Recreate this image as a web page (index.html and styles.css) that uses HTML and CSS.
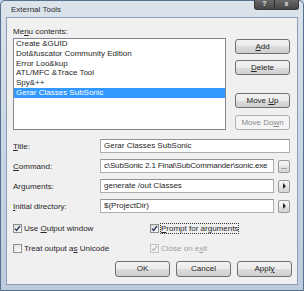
FILE: index.html
```html
<!DOCTYPE html>
<html lang="en">
<head>
    <title>External Tools</title>
    <link rel="stylesheet" href="styles.css">
</head>
<body>
<div class="window">
    <div class="titlebar">
        <span class="title">External Tools</span>
        <div class="caption">
            <span class="cap-help">?</span>
            <span class="cap-close">x</span>
        </div>
    </div>

    <div class="client">
        <div class="top">
            <div class="menuCol">
                <div class="fieldLabel">Me<u>n</u>u contents:</div>
                <ul class="menuList">
                    <li>Create &amp;GUID</li>
                    <li>Dot&amp;fuscator Community Edition</li>
                    <li>Error Loo&amp;kup</li>
                    <li>ATL/MFC &amp;Trace Tool</li>
                    <li>Spy&amp;++</li>
                    <li class="selected">Gerar Classes SubSonic</li>
                </ul>
            </div>
            <div class="sideButtons">
                <button class="btn"><u>A</u>dd</button>
                <button class="btn btnDelete"><u>D</u>elete</button>
                <button class="btn btnUp">Move <u>U</u>p</button>
                <button class="btn btnDown" disabled>Move Do<u>w</u>n</button>
            </div>
        </div>

        <div class="fields">
            <div class="fieldRow">
                <label><u>T</u>itle:</label>
                <div class="textbox">Gerar Classes SubSonic</div>
            </div>
            <div class="fieldRow">
                <label><u>C</u>ommand:</label>
                <div class="textbox tight">c\SubSonic 2.1 Final\SubCommander\sonic.exe</div>
                <button class="mini">...</button>
            </div>
            <div class="fieldRow">
                <label>Ar<u>g</u>uments:</label>
                <div class="textbox">generate /out Classes</div>
                <button class="mini"><span class="arrow"></span></button>
            </div>
            <div class="fieldRow">
                <label><u>I</u>nitial directory:</label>
                <div class="textbox">$(ProjectDir)</div>
                <button class="mini"><span class="arrow"></span></button>
            </div>
        </div>

        <div class="checks">
            <div class="check">
                <span class="box"><svg width="7" height="7" viewBox="0 0 7 7"><path d="M1 3.6 L2.6 5.4 L6 1" fill="none" stroke="#24345a" stroke-width="1.3"/></svg></span>
                <span>Use <u>O</u>utput window</span>
            </div>
            <div class="check">
                <span class="box"><svg width="7" height="7" viewBox="0 0 7 7"><path d="M1 3.6 L2.6 5.4 L6 1" fill="none" stroke="#24345a" stroke-width="1.3"/></svg></span>
                <span class="focus"><u>P</u>rompt for arguments</span>
            </div>
            <div class="check">
                <span class="box"></span>
                <span>Treat output a<u>s</u> Unicode</span>
            </div>
            <div class="check disabled">
                <span class="box"><svg width="7" height="7" viewBox="0 0 7 7"><path d="M1 3.6 L2.6 5.4 L6 1" fill="none" stroke="#b8b8b8" stroke-width="1.3"/></svg></span>
                <span>Close on e<u>x</u>it</span>
            </div>
        </div>

        <div class="actions">
            <button class="btn">OK</button>
            <button class="btn">Cancel</button>
            <button class="btn">Appl<u>y</u></button>
        </div>
    </div>
</div>
</body>
</html>
```

FILE: styles.css
```css
body {
    margin: 0;
    font-family: "Liberation Sans", Arial, sans-serif;
    font-size: 8px;
    color: #262626;
    background: #c6d4e3;
}

u {
    text-decoration-thickness: 1px;
    text-underline-offset: 1px;
}

.window {
    width: 304px;
    height: 291px;
    box-sizing: border-box;
    border: 1px solid #56708f;
    border-radius: 5px 5px 0 0;
    background: linear-gradient(#dce3eb, #cdd8e5 40%, #bccbdd);
    padding: 0 5px 5px 5px;
    display: flex;
    flex-direction: column;
}

.titlebar {
    height: 16px;
    display: flex;
    align-items: flex-start;
}

.title {
    padding: 4px 0 0 5px;
    line-height: 9px;
    color: #2b2b2b;
}

.caption {
    margin-left: auto;
    margin-top: -1px;
    margin-right: -1px;
    display: flex;
    height: 9px;
    background: linear-gradient(#6a6a6a, #454545);
    border: 1px solid #3a3a3a;
    border-top: none;
    border-radius: 0 0 3px 3px;
    color: #e8e8e8;
    font-size: 7px;
    line-height: 8px;
    font-weight: bold;
}

.cap-help {
    width: 19px;
    text-align: center;
    border-right: 1px solid #2e2e2e;
}

.cap-close {
    width: 23px;
    text-align: center;
}

.client {
    flex: 1;
    background: #f0f0f0;
    border: 1px solid #8b9fb8;
    padding: 9px 7px 7px 6px;
    display: flex;
    flex-direction: column;
}

.top {
    display: flex;
    gap: 9px;
}

.menuCol {
    width: 213px;
    display: flex;
    flex-direction: column;
}

.fieldLabel {
    line-height: 10px;
    margin-bottom: 1px;
}

.menuList {
    height: 92px;
    box-sizing: border-box;
    border: 1px solid #828790;
    background: #ffffff;
    list-style: none;
    margin: 0;
    padding: 0;
}

.menuList li {
    height: 9.8px;
    line-height: 9.8px;
    padding-left: 2px;
    white-space: nowrap;
}

.menuList li.selected {
    background: #3399ff;
    color: #ffffff;
}

.sideButtons {
    width: 55px;
    display: flex;
    flex-direction: column;
    padding-top: 12px;
}

.btn {
    height: 15px;
    box-sizing: border-box;
    border: 1px solid #707070;
    border-radius: 3px;
    background: linear-gradient(#f2f2f2 0%, #ebebeb 50%, #dddddd 50%, #cfcfcf 100%);
    font: inherit;
    color: #262626;
    padding: 0;
    line-height: 13px;
    text-align: center;
}

.btn:disabled {
    border-color: #adb2b5;
    background: #f4f4f4;
    color: #8a8a8a;
}

.btnDelete {
    margin-top: 6px;
}

.btnUp {
    margin-top: 18px;
}

.btnDown {
    margin-top: 7px;
}

.fields {
    margin-top: 9px;
    display: flex;
    flex-direction: column;
    gap: 6px;
}

.fieldRow {
    display: flex;
    align-items: center;
    height: 14px;
}

.fieldRow label {
    width: 87px;
    flex: none;
}

.textbox {
    flex: 1;
    height: 14px;
    box-sizing: border-box;
    border: 1px solid #abadb3;
    border-top-color: #8e9297;
    background: #ffffff;
    padding-left: 3px;
    line-height: 12px;
    white-space: nowrap;
    overflow: hidden;
}

.textbox.tight {
    letter-spacing: -0.15px;
}

.mini {
    width: 12px;
    height: 13px;
    margin-left: 4px;
    flex: none;
    box-sizing: border-box;
    border: 1px solid #9a9a9a;
    border-radius: 2px;
    background: linear-gradient(#f4f4f4 0%, #eeeeee 50%, #e2e2e2 50%, #d6d6d6 100%);
    font: inherit;
    font-size: 7px;
    line-height: 9px;
    padding: 0;
    display: flex;
    align-items: center;
    justify-content: center;
}

.arrow {
    width: 0;
    height: 0;
    border-left: 3px solid #262626;
    border-top: 3px solid transparent;
    border-bottom: 3px solid transparent;
}

.checks {
    margin-top: 11px;
    display: grid;
    grid-template-columns: 137px 1fr;
    row-gap: 11px;
}

.check {
    display: flex;
    align-items: center;
    gap: 2px;
    height: 9px;
    line-height: 9px;
}

.box {
    width: 9px;
    height: 9px;
    box-sizing: border-box;
    border: 1px solid #8e8f8f;
    background: linear-gradient(135deg, #dcdcdc, #ffffff);
    display: flex;
    align-items: center;
    justify-content: center;
}

.focus {
    outline: 1px dotted #333333;
}

.check.disabled {
    color: #a0a0a0;
}

.check.disabled .box {
    border-color: #c4c4c4;
    background: #f4f4f4;
}

.actions {
    margin-top: 8px;
    margin-right: -2px;
    display: flex;
    justify-content: flex-end;
    gap: 6px;
}

.actions .btn {
    width: 55px;
    height: 16px;
    line-height: 14px;
}
```
